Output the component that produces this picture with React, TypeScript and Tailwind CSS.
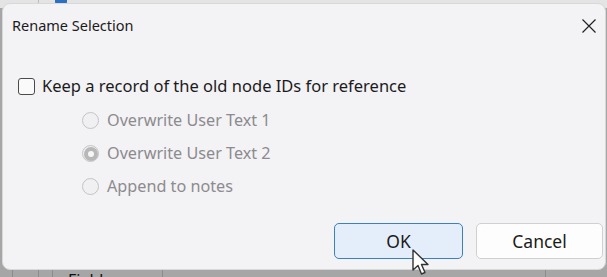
import React from "react";

function Radio({ checked, label }: { checked?: boolean; label: string }) {
  return (
    <div className="flex items-center h-[33px]">
      <span className="w-[17px] h-[17px] rounded-full border border-[#c4c4c4] bg-[#f0eff2] flex items-center justify-center">
        {checked && <span className="w-[6px] h-[6px] rounded-full bg-[#f7f7f7] ring-[4px] ring-[#b8b8b8]" />}
      </span>
      <span className="ml-[8px] text-[#8c8b8e]">{label}</span>
    </div>
  );
}

export default function App() {
  return (
    <div
      className="w-[607px] h-[277px] bg-[#a6a6a6] relative overflow-hidden"
      style={{ fontFamily: '"Noto Sans", "Open Sans", sans-serif' }}
    >
      <div className="absolute left-0 top-0 w-[607px] h-[8px] bg-[#e4e4e4]">
        <span className="absolute left-[38px] top-0 w-[1px] h-[8px] bg-[#bdbdbd]" />
        <span className="absolute left-[55px] top-[-4px] w-[12px] h-[8px] rounded-[2px] bg-[#2f6fc0]" />
      </div>
      <div className="absolute left-0 top-[268px] w-[607px] h-[9px]">
        <span className="absolute left-[12px] top-0 w-[1px] h-[9px] bg-[#8c8c8c]" />
        <span className="absolute left-[38px] top-0 w-[1px] h-[9px] bg-[#8c8c8c]" />
        <span className="absolute left-[52px] top-0 w-[1px] h-[9px] bg-[#8c8c8c]" />
        <span className="absolute left-[162px] top-0 w-[1px] h-[9px] bg-[#8c8c8c]" />
        <span className="absolute left-[545px] top-0 w-[1px] h-[9px] bg-[#8c8c8c]" />
        <span className="absolute left-[68px] top-[3px] text-[16px] leading-[18px] text-[#111]">Field</span>
      </div>
      <div className="absolute left-[2px] top-[3px] w-[604px] h-[267px] bg-[#f3f2f5] rounded-[8px] border border-[#d8d7da] flex flex-col">
        <div className="flex items-center justify-between h-[44px] pl-[9px] pr-[8px]">
          <span className="text-[14.5px] text-[#1b1b1b]">Rename Selection</span>
          <svg width="16" height="16" viewBox="0 0 16 16">
            <path d="M1.5 1.5 L14.5 14.5 M14.5 1.5 L1.5 14.5" stroke="#222" strokeWidth="1.2" />
          </svg>
        </div>
        <div className="pl-[15px] pt-[27px] text-[16.5px]">
          <div className="flex items-center h-[22px]">
            <span className="w-[17px] h-[17px] rounded-[3px] border border-[#4a4a4a] bg-[#fafafa]" />
            <span className="ml-[7px] text-[#1b1b1b]">Keep a record of the old node IDs for reference</span>
          </div>
          <div className="pl-[64px] pt-[7px] text-[16.2px]">
            <Radio label="Overwrite User Text 1" />
            <Radio checked label="Overwrite User Text 2" />
            <Radio label="Append to notes" />
          </div>
        </div>
        <div className="flex justify-end gap-[13px] pr-[2px] mt-auto mb-[10px]">
          <button className="w-[129px] h-[36px] rounded-[5px] border-[1.5px] border-[#3d80c0] bg-[#e3eefa] text-[17.5px] text-[#1b1b1b]">
            OK
          </button>
          <button className="w-[127px] h-[36px] rounded-[5px] border border-[#d0d0d0] bg-[#fdfdfd] text-[17.5px] text-[#1b1b1b]">
            Cancel
          </button>
        </div>
      </div>
      <svg className="absolute left-[411px] top-[249px]" width="22" height="28" viewBox="0 0 22 28">
        <path d="M2 1 L2 21 L7 16.5 L10.5 25 L14 23.5 L10.5 15.5 L17 15.5 Z" fill="#fff" stroke="#333" strokeWidth="1.4" strokeLinejoin="round" />
      </svg>
    </div>
  );
}
